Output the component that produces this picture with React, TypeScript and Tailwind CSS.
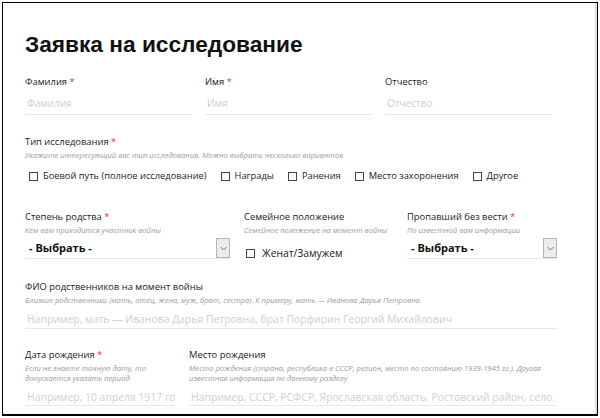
import React from 'react';

const Req = () => <span className="text-[#d9383a]"> *</span>;

const Label = ({ text, required }: { text: string; required?: boolean }) => (
  <div className="text-[9.4px] leading-[14px] text-[#1c1c1c] whitespace-nowrap">
    {text}
    {required && <Req />}
  </div>
);

const Hint = ({ children, lh = 'normal' }: { children: React.ReactNode; lh?: 'normal' | 'tight' }) => (
  <div
    className={
      lh === 'normal'
        ? 'text-[7.6px] leading-[12px] italic text-[#9a9a9a] whitespace-nowrap'
        : 'mt-[1px] text-[7.6px] leading-[10px] italic text-[#9a9a9a] whitespace-nowrap'
    }
  >
    {children}
  </div>
);

const Box = () => <span className="inline-block w-[9px] h-[9px] border border-[#444] bg-white shrink-0" />;

const Check = ({ text, big }: { text: string; big?: boolean }) => (
  <div
    className={
      big
        ? 'flex items-center gap-[7px] text-[10.3px] leading-[14px] text-[#222] whitespace-nowrap'
        : 'flex items-center gap-[5px] text-[9.3px] leading-[14px] text-[#222] whitespace-nowrap'
    }
  >
    <Box />
    <span>{text}</span>
  </div>
);

const Select = () => (
  <div className="mt-[1px] flex items-end border-b border-[#e8e8e8] h-[22px]">
    <div className="flex-1 pl-[4px] pb-[3px] text-[11px] font-bold leading-[14px] text-[#111]">- Выбрать -</div>
    <div className="w-[14px] h-[20px] bg-[#ececec] border border-[#b5b5b5] flex items-center justify-center">
      <svg width="7" height="5" viewBox="0 0 7 5" fill="none">
        <path d="M0.5 1 L3.5 4 L6.5 1" stroke="#666" strokeWidth="0.9" />
      </svg>
    </div>
  </div>
);

const Field = ({ text }: { text: string }) => (
  <div className="border-b border-[#e8e8e8] h-[26px] pt-[7px] pl-[2px] text-[10px] leading-[14px] text-[#cfcfcf]">{text}</div>
);

export default function App() {
  return (
    <div className="w-[600px] h-[418px] bg-white" style={{ fontFamily: '"Open Sans", "Noto Sans", sans-serif' }}>
      <div className="ml-[2px] mt-[2px] w-[596px] h-[414px] border-l border-t border-r border-b-2 border-black bg-white overflow-hidden shadow-[inset_-2px_0_0_#e2e2e2]">
        <div className="pl-[22px] pr-[38px]">
          <h1
            className="mt-[26px] text-[22.7px] leading-[30px] font-bold text-[#111] whitespace-nowrap"
            style={{ fontFamily: '"Liberation Sans", Arial, sans-serif' }}
          >
            Заявка на исследование
          </h1>

          <div className="mt-[16px] grid grid-cols-[167px_167px_167px] gap-x-[13px]">
            <div>
              <Label text="Фамилия" required />
              <Field text="Фамилия" />
            </div>
            <div>
              <Label text="Имя" required />
              <Field text="Имя" />
            </div>
            <div>
              <Label text="Отчество" />
              <Field text="Отчество" />
            </div>
          </div>

          <div className="mt-[20px]">
            <Label text="Тип исследования" required />
            <Hint>Укажите интересующий вас тип исследования. Можно выбрать несколько вариантов</Hint>
            <div className="mt-[8px] pl-[4px] flex items-center gap-[14px]">
              <Check text="Боевой путь (полное исследование)" />
              <Check text="Награды" />
              <Check text="Ранения" />
              <Check text="Место захоронения" />
              <Check text="Другое" />
            </div>
          </div>

          <div className="mt-[27px] flex">
            <div className="w-[205px]">
              <Label text="Степень родства" required />
              <Hint>Кем вам приходится участник войны</Hint>
              <Select />
            </div>
            <div className="w-[150px] ml-[14px]">
              <Label text="Семейное положение" />
              <Hint>Семейное положение на момент войны</Hint>
              <div className="mt-[10px] pl-[2px]">
                <Check big text="Женат/Замужем" />
              </div>
            </div>
            <div className="w-[150px] ml-[13px]">
              <Label text="Пропавший без вести" required />
              <Hint>По известной вам информации</Hint>
              <Select />
            </div>
          </div>

          <div className="mt-[20px] w-[533px]">
            <Label text="ФИО родственников на момент войны" />
            <Hint>Близкие родственники (мать, отец, жена, муж, брат, сестра). К примеру, мать — Иванова Дарья Петровна</Hint>
            <div className="border-b border-[#e8e8e8] h-[23px] pt-[5px] pl-[2px] text-[10.4px] leading-[16px] text-[#cfcfcf] whitespace-nowrap overflow-hidden">
              Например, мать — Иванова Дарья Петровна, брат Порфирин Георгий Михайлович
            </div>
          </div>

          <div className="mt-[19px] flex">
            <div className="w-[150px]">
              <Label text="Дата рождения" required />
              <Hint lh="tight">
                Если не знаете точную дату, то
                <br />
                допускается указать период
              </Hint>
              <div className="border-b border-[#e8e8e8] h-[23px] pt-[6px] pl-[2px] text-[10.4px] leading-[16px] text-[#cfcfcf] whitespace-nowrap overflow-hidden">
                Например, 10 апреля 1917 года
              </div>
            </div>
            <div className="w-[367px] ml-[14px]">
              <Label text="Место рождения" />
              <Hint lh="tight">
                Место рождения (страна, республика в СССР, регион, место по состоянию 1939-1945 гг.). Другая
                <br />
                известная информация по данному разделу
              </Hint>
              <div className="border-b border-[#e8e8e8] h-[23px] pt-[6px] pl-[2px] text-[10.4px] leading-[16px] text-[#cfcfcf] whitespace-nowrap overflow-hidden">
                Например, СССР, РСФСР, Ярославская область, Ростовский район, село Николо-Ухтома
              </div>
            </div>
          </div>
        </div>
      </div>
    </div>
  );
}
